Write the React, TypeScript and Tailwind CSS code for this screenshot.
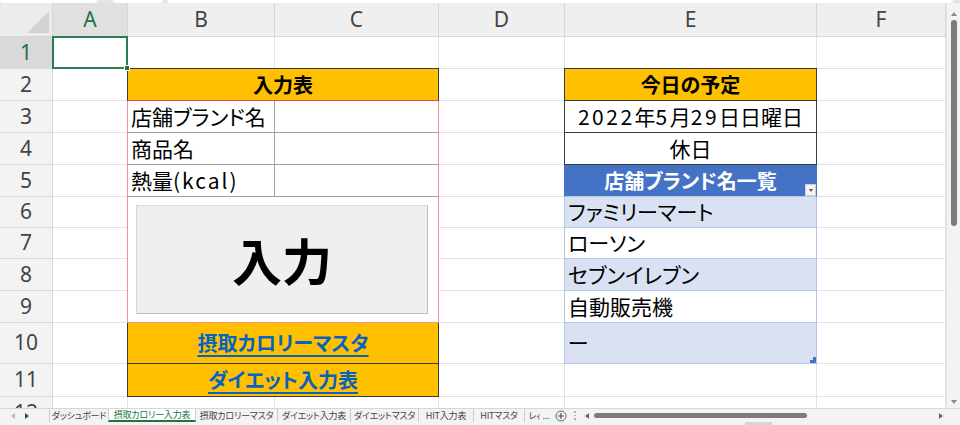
import React from 'react';

// Excel-like sheet: 摂取カロリー入力表
const CJK = "[font-family:'Noto_Sans_CJK_JP',sans-serif] [font-feature-settings:'palt']";
const UI = "[font-family:'Noto_Sans','Noto_Sans_CJK_JP',sans-serif]";

const COL = ['col-start-1', 'col-start-2', 'col-start-3', 'col-start-4', 'col-start-5', 'col-start-6', 'col-start-7'];
const ROW = [
  'row-start-1', 'row-start-2', 'row-start-3', 'row-start-4', 'row-start-5', 'row-start-6', 'row-start-7',
  'row-start-8', 'row-start-9', 'row-start-10', 'row-start-11', 'row-start-12', 'row-start-13',
];
const LETTERS = ['A', 'B', 'C', 'D', 'E', 'F'];

const BRANDS = [
  { name: 'ファミリーマート', h: 'h-[31px]', band: true },
  { name: 'ローソン', h: 'h-[31px]', band: false },
  { name: 'セブンイレブン', h: 'h-[32px]', band: true },
  { name: '自動販売機', h: 'h-[32px]', band: false },
];

function Headers() {
  return (
    <>
      <div className="relative col-start-1 row-start-1 border-r border-b border-[#d4d4d4] bg-[#ececec]">
        <svg className="absolute right-[3px] bottom-[3px]" width="22" height="22">
          <polygon points="22,0 22,22 0,22" fill="#d2d2d2" />
        </svg>
      </div>
      {LETTERS.map((l, i) => (
        <div
          key={l}
          className={`${COL[i + 1]} row-start-1 flex items-center justify-center border-r border-b border-[#d8d8d8] text-[21px] ${
            i === 0 ? 'bg-[#e0e0e0] text-[#1e7145]' : 'bg-[#efefef] text-[#444]'
          }`}
        >
          {l}
        </div>
      ))}
    </>
  );
}

function Gridlines() {
  return (
    <>
      {Array.from({ length: 12 }, (_, r) => (
        <React.Fragment key={r}>
          <div
            className={`${ROW[r + 1]} col-start-1 flex items-center justify-center border-r border-b border-[#d8d8d8] text-[21px] ${
              r === 0 ? 'bg-[#d9d9d9] text-[#1e7145]' : 'bg-[#f3f3f3] text-[#444]'
            }`}
          >
            {r + 1}
          </div>
          {LETTERS.map((l, c) => (
            <div key={l} className={`${ROW[r + 1]} ${COL[c + 1]} border-r border-b border-[#e2e2e2]`} />
          ))}
        </React.Fragment>
      ))}
    </>
  );
}

function InputTable() {
  return (
    <div className={`col-start-3 col-end-5 row-start-3 row-end-13 -mt-px -ml-px flex flex-col text-[21px] text-black ${CJK}`}>
      <div className="flex h-[33px] items-center justify-center border border-[#3a3a3a] border-b-[#ff4040] bg-[#ffc000] text-[20px] font-bold">
        入力表
      </div>
      <div className="flex h-[222px] flex-col border-x border-b border-[#ff8c8c] bg-white">
        {['店舗ブランド名', '商品名', 'kcal'].map((t) => (
          <div key={t} className="flex h-[32px] border-b border-[#a3a3a3]">
            <div className="flex w-[147px] items-center border-r border-[#a3a3a3] pl-[3px] leading-none">
              {t === 'kcal' ? (
                <>
                  熱量<span className="tracking-[2px]">(kcal)</span>
                </>
              ) : (
                t
              )}
            </div>
            <div className="flex-1" />
          </div>
        ))}
        <div className="flex-1 pt-[8px] pr-[10px] pb-[8px] pl-[8px]">
          <div className="flex h-full items-center justify-center border border-[#d8d8d8] border-r-[#bcbcbc] border-b-[#bcbcbc] bg-[#efefef] text-[50px] font-bold">
            入力
          </div>
        </div>
      </div>
      <div className="flex h-[41px] items-center justify-center border-x border-b border-[#3a3a3a] bg-[#ffc000] text-[20px]">
        <span className="font-bold text-[#0563c1] underline decoration-[1.5px] underline-offset-[4px]">摂取カロリーマスタ</span>
      </div>
      <div className="flex h-[33px] items-center justify-center border-x border-b border-[#3a3a3a] bg-[#ffc000] text-[20px]">
        <span className="font-bold text-[#0563c1] underline decoration-[1.5px] underline-offset-[4px]">ダイエット入力表</span>
      </div>
    </div>
  );
}

function ScheduleTable() {
  return (
    <div className={`col-start-6 row-start-3 row-end-12 -mt-px -ml-px flex flex-col text-[21px] text-black ${CJK}`}>
      <div className="flex h-[33px] items-center justify-center border border-[#3a3a3a] bg-[#ffc000] text-[20px] font-bold">
        今日の予定
      </div>
      <div className="flex h-[32px] items-center justify-center border-x border-b border-[#3a3a3a] bg-white">
        <span className="tracking-[2.5px]">2022</span>年<span className="tracking-[2.5px]">5</span>月
        <span className="tracking-[2.5px]">29</span>日日曜日
      </div>
      <div className="flex h-[32px] items-center justify-center border-x border-b border-[#3a3a3a] bg-white">休日</div>
      <div className="relative flex h-[32px] items-center justify-center border-x border-b border-x-[#4472c4] border-b-[#b4c6e7] bg-[#4472c4] text-[20px] font-bold text-white">
        店舗ブランド名一覧
        <div className="absolute right-0 bottom-0 flex h-[12px] w-[11px] items-center justify-center border border-[#d0d0d0] bg-[#f4f4f4]">
          <div className="h-0 w-0 border-x-[2.5px] border-t-[3px] border-x-transparent border-t-[#555]" />
        </div>
      </div>
      {BRANDS.map((b) => (
        <div
          key={b.name}
          className={`flex ${b.h} items-center border-x border-b border-[#b4c6e7] pl-[3px] ${b.band ? 'bg-[#d9e1f2]' : 'bg-white'}`}
        >
          {b.name}
        </div>
      ))}
      <div className="relative flex h-[41px] items-center border-x border-b border-[#b4c6e7] bg-[#d9e1f2] pl-[3px]">
        ー
        <svg className="absolute right-0 bottom-0" width="6" height="6">
          <path d="M6 0 V6 H0 V3 H3 V0 Z" fill="#4472c4" />
        </svg>
      </div>
    </div>
  );
}

function Tab({ w, label, active }: { w: string; label: React.ReactNode; active?: boolean }) {
  return (
    <div
      className={`flex ${w} h-[13px] items-center justify-center overflow-hidden whitespace-nowrap ${
        active ? 'border-x border-b-2 border-x-[#cfcfcf] border-b-[#217346] bg-white text-[#217346]' : 'text-[#444]'
      }`}
    >
      {label}
    </div>
  );
}

function Sep() {
  return <div className="h-[13px] w-px bg-[#cacaca]" />;
}

function TabBar() {
  return (
    <div className={`flex h-[17px] flex-col border-t border-[#d6d6d6] bg-[#f3f3f3] text-[9px] leading-none tracking-[-0.2px] ${CJK}`}>
      <div className="flex h-[13px] items-start">
        <div className="flex h-[13px] w-[49px] items-center">
          <div className="ml-[11px] h-0 w-0 border-y-[3px] border-r-[4px] border-y-transparent border-r-[#bdbdbd]" />
          <div className="ml-[10px] h-0 w-0 border-y-[3px] border-l-[4px] border-y-transparent border-l-[#1f5c3a]" />
        </div>
        <Sep />
        <Tab w="w-[58px]" label="ダッシュボード" />
        <Tab w="w-[88px]" label="摂取カロリー入力表" active />
        <Tab w="w-[81px]" label="摂取カロリーマスタ" />
        <Sep />
        <Tab w="w-[72px]" label="ダイエット入力表" />
        <Sep />
        <Tab w="w-[67px]" label="ダイエットマスタ" />
        <Sep />
        <Tab w="w-[54px]" label="HIT入力表" />
        <Sep />
        <Tab w="w-[50px]" label="HITマスタ" />
        <Sep />
        <Tab
          w="w-[28px]"
          label={
            <>
              レｨ<span className="ml-[2px] text-[#217346]">...</span>
            </>
          }
        />
        <div className="flex h-[13px] w-[16px] items-center justify-center">
          <svg width="12" height="12" viewBox="0 0 12 12">
            <circle cx="6" cy="6" r="5" fill="none" stroke="#666" strokeWidth="1" />
            <path d="M6 3 V9 M3 6 H9" stroke="#555" strokeWidth="1.2" />
          </svg>
        </div>
        <div className="flex h-[13px] w-[12px] flex-col items-center justify-center gap-[2px]">
          <div className="h-[1.5px] w-[1.5px] bg-[#b0b0b0]" />
          <div className="h-[1.5px] w-[1.5px] bg-[#b0b0b0]" />
          <div className="h-[1.5px] w-[1.5px] bg-[#b0b0b0]" />
        </div>
        <div className="flex h-[13px] flex-1 items-center">
          <div className="ml-[4px] h-0 w-0 border-y-[3px] border-r-[4px] border-y-transparent border-r-[#666]" />
          <div className="ml-[5px] h-[5px] w-[213px] rounded-full bg-[#7b7b7b]" />
          <div className="flex-1" />
          <div className="mr-[3px] h-0 w-0 border-y-[3px] border-l-[4px] border-y-transparent border-l-[#666]" />
        </div>
        <div className="w-[14px]" />
      </div>
      <div className="flex h-[3px]">
        <div className="ml-[745px] h-full w-[27px] bg-[#d6d6d6]" />
      </div>
    </div>
  );
}

export default function App() {
  return (
    <div className={`flex h-[425px] w-[960px] flex-col overflow-hidden bg-white ${UI}`}>
      {/* bottom edge of name box / formula bar */}
      <div className="flex h-[3px] bg-[#e6e6e6]">
        <div className="w-[97px] rounded-b-[3px] bg-white" />
        <div className="ml-[16px] w-[50px] rounded-b-[3px] bg-white" />
        <div className="mr-[7px] ml-[4px] flex-1 rounded-b-[3px] bg-white" />
      </div>

      <div className="flex h-[405px]">
        <div className="grid h-[405px] w-[946px] grid-cols-[53px_75px_147px_164px_126px_252px_129px] grid-rows-[34px_32px_32px_32px_32px_32px_31px_31px_32px_32px_41px_33px_32px] overflow-hidden">
          <Headers />
          <Gridlines />
          <InputTable />
          <ScheduleTable />
          {/* selected cell A1 */}
          <div className="relative col-start-2 row-start-2 -mt-px -ml-px border-2 border-[#2e7d52]">
            <div className="absolute -right-[4px] -bottom-[4px] h-[6px] w-[6px] border border-white bg-[#217346]" />
          </div>
        </div>

        {/* vertical scrollbar */}
        <div className="flex w-[14px] flex-col items-center border-l border-[#e3e3e3] bg-[#f3f3f3]">
          <div className="mt-[9px] h-0 w-0 border-x-[3px] border-b-[4px] border-x-transparent border-b-[#8a8a8a]" />
          <div className="mt-[4px] h-[206px] w-[6px] rounded-full bg-[#7b7b7b]" />
          <div className="flex-1" />
          <div className="mb-[4px] h-0 w-0 border-x-[3px] border-t-[4px] border-x-transparent border-t-[#8a8a8a]" />
        </div>
      </div>

      <TabBar />
    </div>
  );
}
